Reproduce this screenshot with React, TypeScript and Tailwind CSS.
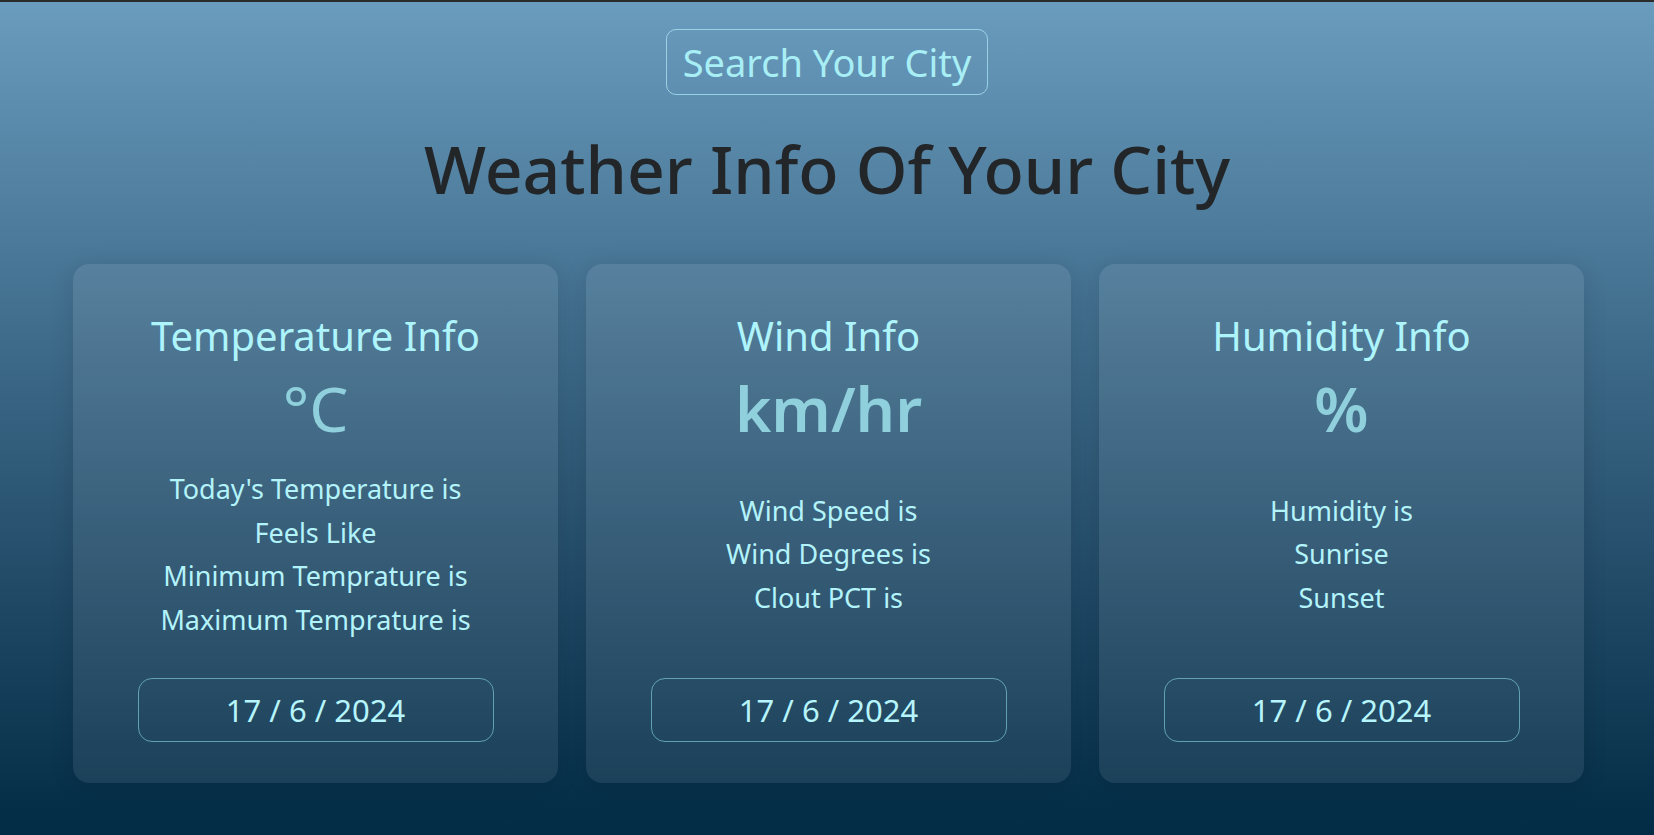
const cards = [
  {
    title: "Temperature Info",
    unit: "°C",
    unitWeight: "font-normal",
    lines: [
      "Today's Temperature is",
      "Feels Like",
      "Minimum Temprature is",
      "Maximum Temprature is",
    ],
  },
  {
    title: "Wind Info",
    unit: "km/hr",
    unitWeight: "font-semibold",
    lines: ["Wind Speed is", "Wind Degrees is", "Clout PCT is"],
  },
  {
    title: "Humidity Info",
    unit: "%",
    unitWeight: "font-semibold",
    lines: ["Humidity is", "Sunrise", "Sunset"],
  },
];

function InfoCard({
  title,
  unit,
  unitWeight,
  lines,
}: {
  title: string;
  unit: string;
  unitWeight: string;
  lines: string[];
}) {
  return (
    <div className="flex h-[519px] flex-col items-center rounded-[16px] bg-white/[0.08] pt-[47px] pb-[41px] shadow-[0_4px_24px_rgba(0,0,0,0.12)]">
      <h2 className="h-[50px] text-[40px] leading-[50px] text-[#aef4fb]">
        {title}
      </h2>
      <div
        className={`mt-[15px] h-[64px] text-[62px] leading-[64px] text-[#8fd0dc] ${unitWeight}`}
      >
        {unit}
      </div>
      <div className="mb-[10px] flex flex-1 flex-col items-center justify-center">
        {lines.map((line) => (
          <p
            key={line}
            className="text-[27px] leading-[43.5px] text-[#b3f3fa]"
          >
            {line}
          </p>
        ))}
      </div>
      <div className="flex h-[64px] w-[356px] items-center justify-center rounded-[14px] border border-[#7cc4d4]/70 text-[31px] text-[#b6f5fb]">
        17 / 6 / 2024
      </div>
    </div>
  );
}

export default function App() {
  return (
    <main
      className="flex h-[835px] w-full flex-col items-center border-t-2 border-t-[#2b2b2b] bg-gradient-to-b from-[#6a9cbe] to-[#022b45]"
      style={{ fontFamily: '"Noto Sans", "Open Sans", sans-serif' }}
    >
      {/* search */}
      <div className="mt-[27px] flex h-[66px] w-[322px] items-center justify-center rounded-[10px] border border-[#a6e2ee]/80 text-[38px] text-[#a8eef5]">
        Search Your City
      </div>
      <h1 className="mt-[31px] text-[66px] leading-[84px] font-medium text-[#232629]">
        Weather Info Of Your City
      </h1>
      {/* cards */}
      <div className="mt-[54px] grid w-full grid-cols-3 gap-[28px] pl-[73px] pr-[70px]">
        {cards.map((card) => (
          <InfoCard key={card.title} {...card} />
        ))}
      </div>
    </main>
  );
}
